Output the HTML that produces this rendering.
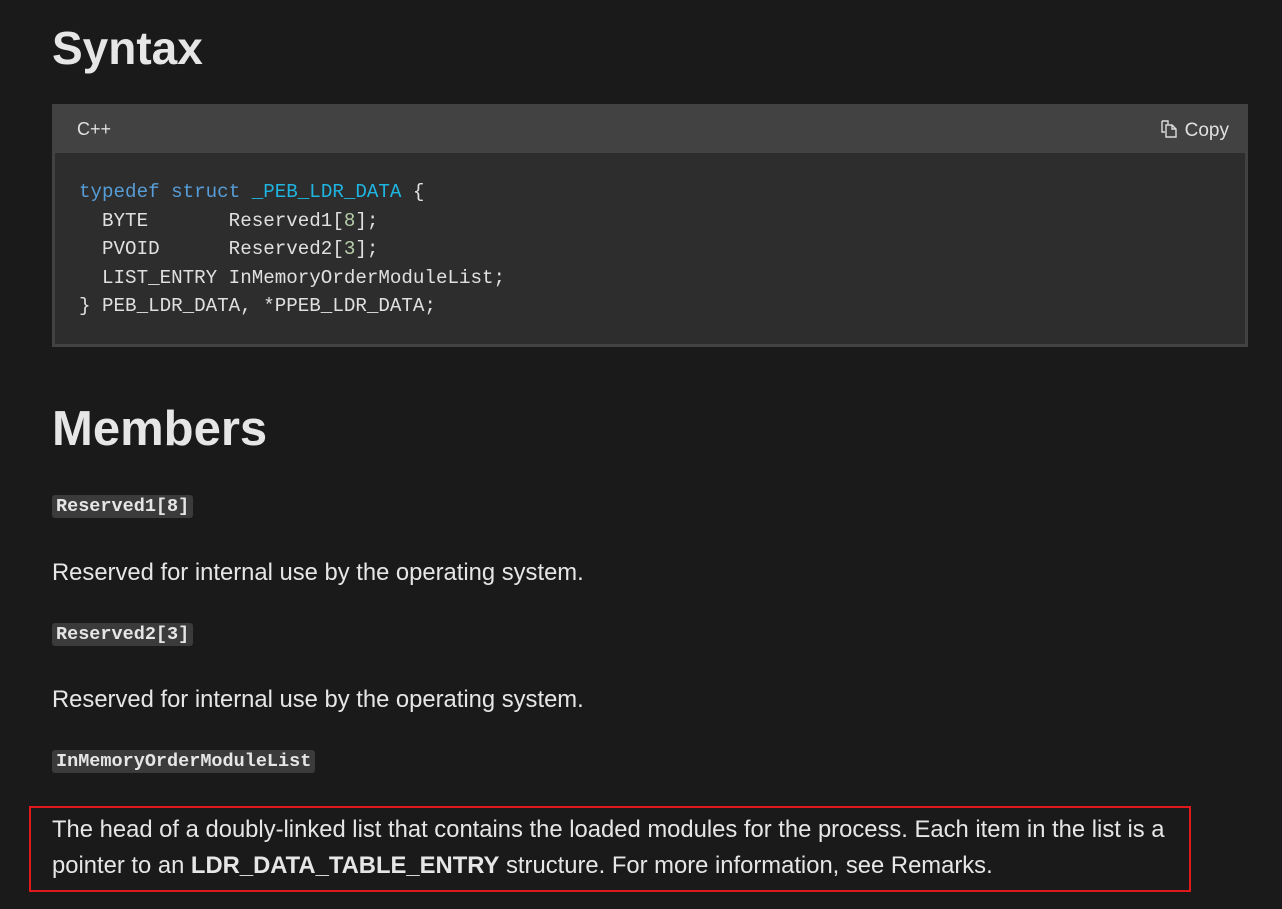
<!DOCTYPE html>
<html><head><style>
body{margin:0;background:#1a1a1a;width:1282px;height:909px;overflow:hidden;font-family:"Liberation Sans",sans-serif;color:#e6e6e6}
h1{position:absolute;left:52px;margin:0;font-size:46px;font-weight:bold;color:#e6e6e6}
.box{position:absolute;left:52px;top:104px;width:1196px;height:243px;background:#424242}
.hdr{height:49px;position:relative;font-size:18px;color:#e0e0e0}
.hdr .l{position:absolute;left:25px;top:15px}
.hdr .r{position:absolute;right:19px;top:15px;font-size:19px}
.code{position:absolute;left:3px;right:3px;top:49px;bottom:3px;background:#2d2d2d;font-family:"Liberation Mono",monospace;font-size:19.2px;line-height:28.5px;white-space:pre;padding:25px 0 0 24px;color:#e0e0e0;box-sizing:border-box}
.k{color:#569cd6}.t{color:#1fb5e0}.n{color:#b5cea8}
code{position:absolute;left:52px;background:#3b3b3b;border-radius:3px;font-family:"Liberation Mono",monospace;font-weight:bold;font-size:18.5px;padding:1px 4px;color:#e6e6e6}
p{position:absolute;left:52px;margin:0;font-size:23.8px;line-height:36px;color:#e6e6e6;white-space:nowrap}
.red{position:absolute;left:29px;top:806px;width:1158px;height:82px;border:2px solid #e0191c}
</style></head><body>
<h1 style="top:21px">Syntax</h1>
<div class="box">
<div class="hdr"><span class="l">C++</span><span class="r"><svg width="20" height="20" viewBox="0 0 20 20" style="vertical-align:-3px;margin-right:6px" fill="none" stroke="#ddd" stroke-width="1.4"><path d="M3 2h6v3M3 2v11h3"/><path d="M7 6h6l4 4v8H7z M13 6v4h4"/></svg>Copy</span></div>
<div class="code"><span class="k">typedef</span> <span class="k">struct</span> <span class="t">_PEB_LDR_DATA</span> {
  BYTE       Reserved1[<span class="n">8</span>];
  PVOID      Reserved2[<span class="n">3</span>];
  LIST_ENTRY InMemoryOrderModuleList;
} PEB_LDR_DATA, *PPEB_LDR_DATA;</div>
</div>
<h1 style="top:401px;font-size:49px">Members</h1>
<code style="top:495px">Reserved1[8]</code>
<p style="top:555px">Reserved for internal use by the operating system.</p>
<code style="top:623px">Reserved2[3]</code>
<p style="top:682px">Reserved for internal use by the operating system.</p>
<code style="top:750px">InMemoryOrderModuleList</code>
<p style="top:812px">The head of a doubly-linked list that contains the loaded modules for the process. Each item in the list is a<br>pointer to an <b>LDR_DATA_TABLE_ENTRY</b> structure. For more information, see Remarks.</p>
<div class="red"></div>
</body></html>
